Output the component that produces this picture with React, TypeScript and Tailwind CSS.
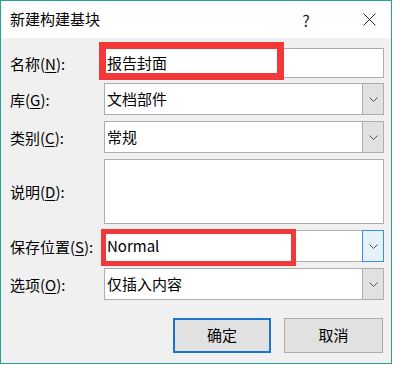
import React from "react";

const font = { fontFamily: '"Microsoft YaHei", "Noto Sans CJK SC", "Noto Sans", sans-serif' };

function Chevron() {
  return (
    <svg width="9" height="5" viewBox="0 0 9 5" fill="none">
      <path d="M0.5 0.5 L4.5 4.5 L8.5 0.5" stroke="#505050" strokeWidth="1" />
    </svg>
  );
}

function Label({ text, u }: { text: string; u: string }) {
  return (
    <div className="w-[94px] shrink-0 text-[15px] text-black leading-none">
      {text}(<span className="underline underline-offset-2">{u}</span>):
    </div>
  );
}

function Field({ value, h = "h-[30px]" }: { value: string; h?: string }) {
  return (
    <div className={`flex-1 ${h} bg-white border border-[#abadb3] flex items-center pl-[2px] text-[15px] text-black`}>
      {value}
    </div>
  );
}

function Combo({ value, active = false }: { value: string; active?: boolean }) {
  return (
    <div className="flex-1 h-[32px] bg-white border border-[#abadb3] flex items-center text-[15px] text-black">
      <div className="flex-1 pl-[2px]">{value}</div>
      <div
        className={
          active
            ? "w-[22px] h-[32px] -my-px -mr-px border border-[#3c8de0] bg-[#e5f1fb] flex items-center justify-center"
            : "w-[22px] h-[32px] -my-px -mr-px border border-[#adadad] bg-[#e1e1e1] flex items-center justify-center"
        }
      >
        <Chevron />
      </div>
    </div>
  );
}

export default function App() {
  return (
    <div className="w-[393px] h-[365px] bg-white" style={font}>
      <div className="relative w-[392px] h-[364px] border border-[#27a096] bg-[#f0f0f0] flex flex-col">
        <div className="h-[37px] bg-white flex items-center pl-[9px] shrink-0">
          <div className="text-[15px] text-black">新建构建基块</div>
          <div className="ml-auto text-[16px] text-[#222] w-[20px] text-center mr-[45px]">?</div>
          <div className="w-[16px] mr-[14px] flex items-center justify-center">
            <svg width="13" height="13" viewBox="0 0 13 13">
              <path d="M0.5 0.5 L12.5 12.5 M12.5 0.5 L0.5 12.5" stroke="#222" strokeWidth="1" />
            </svg>
          </div>
        </div>
        <div className="flex flex-col pl-[9px] pr-[7px] pt-[10px]">
          <div className="flex items-center">
            <Label text="名称" u="N" />
            <Field value="报告封面" />
          </div>
          <div className="flex items-center mt-[5px]">
            <Label text="库" u="G" />
            <Combo value="文档部件" />
          </div>
          <div className="flex items-center mt-[6px]">
            <Label text="类别" u="C" />
            <Combo value="常规" />
          </div>
          <div className="flex items-center mt-[6px]">
            <Label text="说明" u="D" />
            <Field value="" h="h-[65px]" />
          </div>
          <div className="flex items-center mt-[6px]">
            <Label text="保存位置" u="S" />
            <Combo value="Normal" active />
          </div>
          <div className="flex items-center mt-[6px]">
            <Label text="选项" u="O" />
            <Combo value="仅插入内容" />
          </div>
          <div className="flex justify-end gap-[13px] mt-[18px] pr-px">
            <div className="w-[98px] h-[35px] border-2 border-[#1a74c9] bg-[#e1e1e1] flex items-center justify-center text-[15px] text-black">
              确定
            </div>
            <div className="w-[99px] h-[35px] border border-[#adadad] bg-[#e1e1e1] flex items-center justify-center text-[15px] text-black">
              取消
            </div>
          </div>
        </div>
        <div className="absolute left-[98px] top-[41px] w-[185px] h-[38px] border-[7px] border-[#f23838]" />
        <div className="absolute left-[100px] top-[228px] w-[195px] h-[37px] border-[5px] border-[#f23838]" />
      </div>
    </div>
  );
}
